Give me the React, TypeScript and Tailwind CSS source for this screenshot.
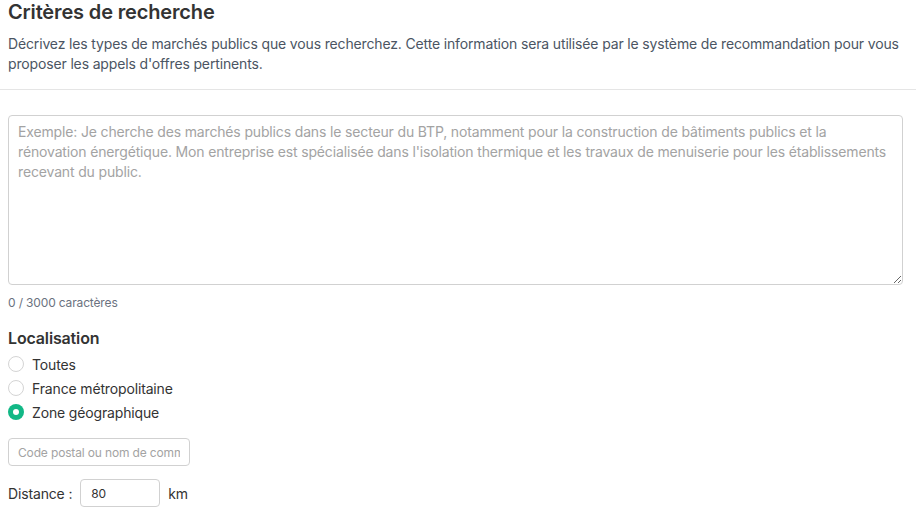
import { useState } from 'react';

const options = ['Toutes', 'France métropolitaine', 'Zone géographique'];

export default function App() {
  const [zone, setZone] = useState('Zone géographique');
  const [text, setText] = useState('');

  return (
    <div className="bg-white min-h-screen font-['Inter','Noto_Sans',sans-serif] tracking-[-0.15px] text-[#333]">
      <div className="px-2">
        <h2 className="text-[20px] leading-[24px] font-semibold text-[#333]">Critères de recherche</h2>
        <p className="mt-[10px] text-[14px] leading-[20px] text-[#4b5563]">
          Décrivez les types de marchés publics que vous recherchez. Cette information sera utilisée par le système de recommandation pour vous proposer les appels d'offres pertinents.
        </p>
      </div>
      <div className="mt-[15px] border-t border-[#e5e5e5]" />

      <div className="px-2 pt-[25px] pr-[13px]">
        <textarea
          value={text}
          onChange={(e) => setText(e.target.value)}
          placeholder="Exemple: Je cherche des marchés publics dans le secteur du BTP, notamment pour la construction de bâtiments publics et la rénovation énergétique. Mon entreprise est spécialisée dans l'isolation thermique et les travaux de menuiserie pour les établissements recevant du public."
          className="block w-full h-[170px] rounded-[4px] border border-[#d1d1d1] px-[9px] py-[6px] text-[14px] leading-[20px] text-[#333] placeholder:text-[#a3a3a3] outline-none resize-y"
        />
        <div className="mt-[10px] text-[12px] leading-[16px] text-[#6b7280]">{text.length} / 3000 caractères</div>

        <h3 className="mt-[17px] text-[16px] leading-[20px] font-semibold text-[#333]">Localisation</h3>
        <div className="mt-[4px] flex flex-col">
          {options.map((o) => (
            <label key={o} className="flex items-center h-[24px] gap-2 cursor-pointer" onClick={() => setZone(o)}>
              {zone === o ? (
                <span className="w-4 h-4 rounded-full bg-[#12b886] flex items-center justify-center">
                  <span className="w-[6px] h-[6px] rounded-full bg-white" />
                </span>
              ) : (
                <span className="w-4 h-4 rounded-full border border-[#d4d4d4] bg-white" />
              )}
              <span className="text-[14px] text-[#333]">{o}</span>
            </label>
          ))}
        </div>

        <input
          placeholder="Code postal ou nom de commune"
          className="mt-[14px] block w-[182px] h-[28px] rounded-[4px] border border-[#d1d1d1] px-[9px] text-[12px] text-[#333] placeholder:text-[#a3a3a3] outline-none"
        />

        <div className="mt-[13px] flex items-center text-[14px] text-[#333]">
          <span>Distance :</span>
          <input
            defaultValue="80"
            className="ml-[8px] w-[80px] h-[28px] rounded-[4px] border border-[#d1d1d1] px-[10px] text-[12px] text-[#333] outline-none"
          />
          <span className="ml-[8px]">km</span>
        </div>
      </div>
    </div>
  );
}
